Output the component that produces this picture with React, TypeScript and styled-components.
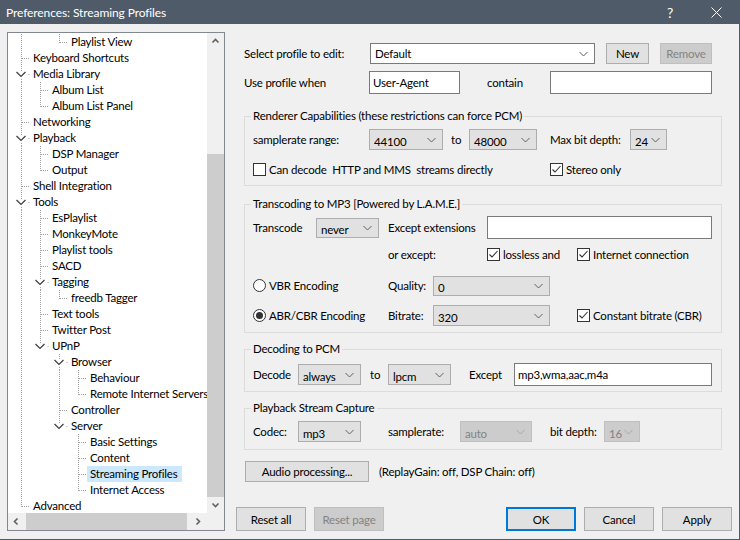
import React from "react";
import styled, { createGlobalStyle } from "styled-components";

const FONT = `"Lato", "Noto Sans", sans-serif`;

const GlobalStyle = createGlobalStyle`
  html, body {
    margin: 0;
    padding: 0;
    background: #f0f0f0;
  }
  body {
    font-family: ${FONT};
    font-size: 11.5px;
    letter-spacing: -0.2px;
    color: #000;
  }
  * {
    box-sizing: border-box;
  }
`;

const Window = styled.div`
  width: 740px;
  height: 540px;
  display: flex;
  flex-direction: column;
  background: #f0f0f0;
  border-right: 1px solid #4f5b69;
  border-bottom: 1px solid #4f5b69;
  overflow: hidden;
`;

const TitleBar = styled.div`
  height: 24px;
  flex: none;
  display: flex;
  align-items: center;
  background: #4f5b69;
  color: #fff;
  padding-left: 6px;
`;

const TitleText = styled.div`
  flex: 1;
  font-size: 12px;
  letter-spacing: -0.1px;
`;

const TitleButton = styled.div`
  width: 46px;
  height: 24px;
  display: flex;
  align-items: center;
  justify-content: center;
  font-size: 14px;
`;

const Body = styled.div`
  display: flex;
  gap: 11px;
  padding: 8px 0 0 7px;
`;

/* ---------- tree ---------- */

const TreeBox = styled.div`
  width: 218px;
  height: 499px;
  flex: none;
  border: 1px solid #828790;
  background: #fff;
  display: grid;
  grid-template-columns: 199px 17px;
  grid-template-rows: 480px 17px;
`;

const TreeContent = styled.div`
  overflow: hidden;
  padding-top: 1px;
`;

const TreeRowLine = styled.div`
  height: 16px;
  display: flex;
  align-items: center;
  white-space: nowrap;
`;

const GuideSvg = styled.svg`
  flex: none;
  line {
    stroke: #a0a0a0;
    stroke-width: 1;
    stroke-dasharray: 1 1;
  }
  path {
    fill: none;
    stroke: #3c3c3c;
    stroke-width: 1.2;
  }
`;

const TreeLabel = styled.span<{ $selected?: boolean }>`
  height: 16px;
  line-height: 16px;
  padding: 0 4px 0 3px;
  background: ${(p) => (p.$selected ? "#cce8ff" : "transparent")};
`;

const VScroll = styled.div`
  background: #f0f0f0;
  display: flex;
  flex-direction: column;
`;

const HScroll = styled.div`
  background: #f0f0f0;
  display: flex;
  align-items: stretch;
`;

const ScrollArrow = styled.div`
  width: 17px;
  height: 17px;
  flex: none;
  display: flex;
  align-items: center;
  justify-content: center;
  svg path {
    fill: none;
    stroke: #606060;
    stroke-width: 1.6;
  }
`;

const VTrack = styled.div`
  flex: 1;
  display: flex;
  flex-direction: column;
`;

const VThumb = styled.div<{ $top: number; $size: number }>`
  margin-top: ${(p) => p.$top}px;
  height: ${(p) => p.$size}px;
  width: 17px;
  background: #cdcdcd;
`;

const HTrack = styled.div`
  flex: 1;
  display: flex;
  align-items: center;
`;

const HThumb = styled.div<{ $left: number; $size: number }>`
  margin-left: ${(p) => p.$left}px;
  width: ${(p) => p.$size}px;
  height: 17px;
  background: #cdcdcd;
`;

const ScrollCorner = styled.div`
  background: #f0f0f0;
`;

/* ---------- right side ---------- */

const RightColumn = styled.div`
  width: 496px;
  height: 499px;
  display: flex;
  flex-direction: column;
`;

const Main = styled.div`
  padding: 11px 10px 0 8px;
  display: flex;
  flex-direction: column;
`;

const Row = styled.div<{ $h: number; $mt?: number }>`
  display: flex;
  align-items: center;
  height: ${(p) => p.$h}px;
  margin-top: ${(p) => p.$mt ?? 0}px;
  white-space: pre;
`;

const Cell = styled.div<{ $w: number }>`
  width: ${(p) => p.$w}px;
  flex: none;
  display: flex;
  align-items: center;
`;

const Text = styled.span<{ $disabled?: boolean }>`
  color: ${(p) => (p.$disabled ? "#838383" : "#000")};
  white-space: pre;
`;

const Group = styled.fieldset<{ $mt: number; $pt: number; $pb: number }>`
  margin: ${(p) => p.$mt}px 0 0 0;
  padding: ${(p) => p.$pt}px 8px ${(p) => p.$pb}px 8px;
  border: 1px solid #dcdcdc;
  min-width: 0;
`;

const Legend = styled.legend`
  padding: 0 2px;
  margin-left: -2px;
  line-height: 14px;
`;

const ComboBox = styled.div<{ $w: number; $h?: number; $variant?: "white" | "gray" | "disabled" }>`
  width: ${(p) => p.$w}px;
  height: ${(p) => p.$h ?? 21}px;
  flex: none;
  display: flex;
  align-items: center;
  padding-left: 4px;
  padding-top: ${(p) => (p.$variant === "white" ? 0 : 3)}px;
  border: 1px solid
    ${(p) =>
      p.$variant === "white" ? "#7a7a7a" : p.$variant === "disabled" ? "#bfbfbf" : "#adadad"};
  background: ${(p) =>
    p.$variant === "white" ? "#fff" : p.$variant === "disabled" ? "#cccccc" : "#e1e1e1"};
  color: ${(p) => (p.$variant === "disabled" ? "#838383" : "#000")};
`;

const ComboText = styled.span`
  flex: 1;
  overflow: hidden;
  white-space: nowrap;
`;

const ComboArrow = styled.svg<{ $disabled?: boolean; $lift?: boolean }>`
  flex: none;
  margin: ${(p) => (p.$lift ? -3 : 0)}px 6px 0 2px;
  path {
    fill: none;
    stroke: ${(p) => (p.$disabled ? "#a6a6a6" : "#606060")};
    stroke-width: 1;
  }
`;

const TextInput = styled.div<{ $w: number; $h?: number }>`
  width: ${(p) => p.$w}px;
  height: ${(p) => p.$h ?? 23}px;
  flex: none;
  display: flex;
  align-items: center;
  padding-left: 3px;
  border: 1px solid #7a7a7a;
  background: #fff;
`;

const Button = styled.div<{ $w: number; $h?: number; $disabled?: boolean; $focused?: boolean }>`
  width: ${(p) => p.$w}px;
  height: ${(p) => p.$h ?? 21}px;
  flex: none;
  display: flex;
  align-items: center;
  justify-content: center;
  border: ${(p) =>
    p.$focused ? "2px solid #0078d7" : p.$disabled ? "1px solid #bfbfbf" : "1px solid #adadad"};
  background: ${(p) => (p.$disabled ? "#cccccc" : "#e1e1e1")};
  color: ${(p) => (p.$disabled ? "#838383" : "#000")};
`;

const CheckBox = styled.span`
  width: 13px;
  height: 13px;
  flex: none;
  border: 1px solid #333;
  background: #fff;
  display: inline-flex;
  align-items: center;
  justify-content: center;
  margin-right: 3px;
  svg polyline {
    fill: none;
    stroke: #333;
    stroke-width: 1.1;
  }
`;

const Radio = styled.span`
  width: 13px;
  height: 13px;
  flex: none;
  border: 1px solid #333;
  border-radius: 50%;
  background: #fff;
  display: inline-flex;
  align-items: center;
  justify-content: center;
  margin-right: 3px;
`;

const RadioDot = styled.span`
  width: 7px;
  height: 7px;
  border-radius: 50%;
  background: #333;
`;

const Footer = styled.div`
  margin-top: auto;
  height: 24px;
  display: flex;
  gap: 8px;
`;

const FooterSpacer = styled.div`
  flex: 1;
`;

/* ---------- data ---------- */

type Item = { label: string; level: number; expanded?: boolean; selected?: boolean };

const ITEMS: Item[] = [
  { label: "Playlist View", level: 2 },
  { label: "Keyboard Shortcuts", level: 0 },
  { label: "Media Library", level: 0, expanded: true },
  { label: "Album List", level: 1 },
  { label: "Album List Panel", level: 1 },
  { label: "Networking", level: 0 },
  { label: "Playback", level: 0, expanded: true },
  { label: "DSP Manager", level: 1 },
  { label: "Output", level: 1 },
  { label: "Shell Integration", level: 0 },
  { label: "Tools", level: 0, expanded: true },
  { label: "EsPlaylist", level: 1 },
  { label: "MonkeyMote", level: 1 },
  { label: "Playlist tools", level: 1 },
  { label: "SACD", level: 1 },
  { label: "Tagging", level: 1, expanded: true },
  { label: "freedb Tagger", level: 2 },
  { label: "Text tools", level: 1 },
  { label: "Twitter Post", level: 1 },
  { label: "UPnP", level: 1, expanded: true },
  { label: "Browser", level: 2, expanded: true },
  { label: "Behaviour", level: 3 },
  { label: "Remote Internet Servers", level: 3 },
  { label: "Controller", level: 2 },
  { label: "Server", level: 2, expanded: true },
  { label: "Basic Settings", level: 3 },
  { label: "Content", level: 3 },
  { label: "Streaming Profiles", level: 3, selected: true },
  { label: "Internet Access", level: 3 },
  { label: "Advanced", level: 0 },
];

const continues = (i: number, l: number) => {
  for (let j = i + 1; j < ITEMS.length; j++) {
    if (ITEMS[j].level < l) return false;
    if (ITEMS[j].level === l) return true;
  }
  return false;
};

const ROWS = ITEMS.map((it, i) => ({
  ...it,
  ancestors: Array.from({ length: it.level }, (_, l) => continues(i, l)),
  hasNext: continues(i, it.level),
}));

type TreeRow = (typeof ROWS)[number];

/* ---------- small drawings ---------- */

const Guides = ({ row }: { row: TreeRow }) => {
  const lx = (l: number) => 13.5 + 19 * l;
  const x = lx(row.level);
  return (
    <GuideSvg width={22 + 19 * row.level} height={16}>
      {row.ancestors.map((c, l) => (c ? <line key={l} x1={lx(l)} y1={0} x2={lx(l)} y2={16} /> : null))}
      {row.expanded ? (
        <>
          <line x1={x} y1={0} x2={x} y2={5} />
          {row.hasNext && <line x1={x} y1={13} x2={x} y2={16} />}
          <line x1={x + 7} y1={8.5} x2={x + 8} y2={8.5} />
          <path d={`M${x - 5} 6 L${x - 0.5} 10.5 L${x + 4} 6`} />
        </>
      ) : (
        <>
          <line x1={x} y1={0} x2={x} y2={row.hasNext ? 16 : 9} />
          <line x1={x + 0.5} y1={8.5} x2={x + 8} y2={8.5} />
        </>
      )}
    </GuideSvg>
  );
};

const Chevron = ({ dir }: { dir: "up" | "down" | "left" | "right" }) => {
  const d = {
    up: "M1.5 5.5 L4.5 2.5 L7.5 5.5",
    down: "M1.5 2.5 L4.5 5.5 L7.5 2.5",
    left: "M5.5 1.5 L2.5 4.5 L5.5 7.5",
    right: "M2.5 1.5 L5.5 4.5 L2.5 7.5",
  }[dir];
  return (
    <svg width={9} height={9}>
      <path d={d} />
    </svg>
  );
};

const Combo = ({
  w,
  h,
  value,
  variant = "gray",
}: {
  w: number;
  h?: number;
  value: string;
  variant?: "white" | "gray" | "disabled";
}) => (
  <ComboBox $w={w} $h={h} $variant={variant}>
    <ComboText>{value}</ComboText>
    <ComboArrow width={9} height={6} $disabled={variant === "disabled"} $lift={variant !== "white"}>
      <path d="M0.5 1 L4.5 5 L8.5 1" />
    </ComboArrow>
  </ComboBox>
);

const Check = ({ checked, label }: { checked?: boolean; label: string }) => (
  <>
    <CheckBox>
      {checked && (
        <svg width={11} height={11}>
          <polyline points="1.5,5.5 4,8 9.5,2" />
        </svg>
      )}
    </CheckBox>
    <Text>{label}</Text>
  </>
);

const RadioOption = ({ checked, label }: { checked?: boolean; label: string }) => (
  <>
    <Radio>{checked && <RadioDot />}</Radio>
    <Text>{label}</Text>
  </>
);

/* ---------- page ---------- */

const Tree = () => (
  <TreeBox>
    <TreeContent>
      {ROWS.map((row) => (
        <TreeRowLine key={row.label}>
          <Guides row={row} />
          <TreeLabel $selected={row.selected}>{row.label}</TreeLabel>
        </TreeRowLine>
      ))}
    </TreeContent>
    <VScroll>
      <ScrollArrow>
        <Chevron dir="up" />
      </ScrollArrow>
      <VTrack>
        <VThumb $top={104} $size={343} />
      </VTrack>
      <ScrollArrow>
        <Chevron dir="down" />
      </ScrollArrow>
    </VScroll>
    <HScroll>
      <ScrollArrow>
        <Chevron dir="left" />
      </ScrollArrow>
      <HTrack>
        <HThumb $left={1} $size={161} />
      </HTrack>
      <ScrollArrow>
        <Chevron dir="right" />
      </ScrollArrow>
    </HScroll>
    <ScrollCorner />
  </TreeBox>
);

export default function App() {
  return (
    <>
      <GlobalStyle />
      <Window>
        <TitleBar>
          <TitleText>Preferences: Streaming Profiles</TitleText>
          <TitleButton>?</TitleButton>
          <TitleButton>
            <svg width={11} height={11}>
              <path d="M0.5 0.5 L10.5 10.5 M10.5 0.5 L0.5 10.5" stroke="#fff" strokeWidth={1} />
            </svg>
          </TitleButton>
        </TitleBar>
        <Body>
          <Tree />
          <RightColumn>
            <Main>
              <Row $h={21}>
                <Cell $w={126}>Select profile to edit:</Cell>
                <Combo w={225} value="Default" variant="white" />
                <Cell $w={11} />
                <Button $w={43}>New</Button>
                <Cell $w={11} />
                <Button $w={52} $disabled>
                  Remove
                </Button>
              </Row>
              <Row $h={23} $mt={7}>
                <Cell $w={125}>Use profile when</Cell>
                <TextInput $w={91}>User-Agent</TextInput>
                <Cell $w={27} />
                <Cell $w={63}>contain</Cell>
                <TextInput $w={162} />
              </Row>

              <Group $mt={15} $pt={6} $pb={7}>
                <Legend>Renderer Capabilities (these restrictions can force PCM)</Legend>
                <Row $h={21}>
                  <Cell $w={116}>samplerate range:</Cell>
                  <Cell $w={82}>
                    <Combo w={74} value="44100" />
                  </Cell>
                  <Cell $w={18}>to</Cell>
                  <Cell $w={81}>
                    <Combo w={68} value="48000" />
                  </Cell>
                  <Cell $w={80}>Max bit depth:</Cell>
                  <Combo w={37} value="24" />
                </Row>
                <Row $h={18} $mt={10}>
                  <Cell $w={297}>
                    <Check label="Can decode  HTTP and MMS  streams directly" />
                  </Cell>
                  <Check checked label="Stereo only" />
                </Row>
              </Group>

              <Group $mt={11} $pt={5} $pb={2}>
                <Legend>Transcoding to MP3 [Powered by L.A.M.E.]</Legend>
                <Row $h={23}>
                  <Cell $w={63}>Transcode</Cell>
                  <Cell $w={72}>
                    <Combo w={63} h={20} value="never" />
                  </Cell>
                  <Cell $w={99}>Except extensions</Cell>
                  <TextInput $w={225} />
                </Row>
                <Row $h={31}>
                  <Cell $w={135} />
                  <Cell $w={99}>or except:</Cell>
                  <Cell $w={90}>
                    <Check checked label="lossless and" />
                  </Cell>
                  <Check checked label="Internet connection" />
                </Row>
                <Row $h={31}>
                  <Cell $w={135}>
                    <RadioOption label="VBR Encoding" />
                  </Cell>
                  <Cell $w={45}>Quality:</Cell>
                  <Combo w={117} h={20} value="0" />
                </Row>
                <Row $h={29}>
                  <Cell $w={135}>
                    <RadioOption checked label="ABR/CBR Encoding" />
                  </Cell>
                  <Cell $w={45}>Bitrate:</Cell>
                  <Cell $w={144}>
                    <Combo w={117} value="320" />
                  </Cell>
                  <Check checked label="Constant bitrate (CBR)" />
                </Row>
              </Group>

              <Group $mt={9} $pt={7} $pb={5}>
                <Legend>Decoding to PCM</Legend>
                <Row $h={23}>
                  <Cell $w={45}>Decode</Cell>
                  <Cell $w={72}>
                    <Combo w={63} h={21} value="always" />
                  </Cell>
                  <Cell $w={18}>to</Cell>
                  <Cell $w={81}>
                    <Combo w={63} h={21} value="lpcm" />
                  </Cell>
                  <Cell $w={45}>Except</Cell>
                  <TextInput $w={198}>mp3,wma,aac,m4a</TextInput>
                </Row>
              </Group>

              <Group $mt={9} $pt={6} $pb={7}>
                <Legend>Playback Stream Capture</Legend>
                <Row $h={21}>
                  <Cell $w={45}>Codec:</Cell>
                  <Cell $w={90}>
                    <Combo w={63} value="mp3" />
                  </Cell>
                  <Cell $w={72}>samplerate:</Cell>
                  <Cell $w={90}>
                    <Combo w={72} value="auto" variant="disabled" />
                  </Cell>
                  <Cell $w={54}>bit depth:</Cell>
                  <Combo w={36} value="16" variant="disabled" />
                </Row>
              </Group>

              <Row $h={21} $mt={11}>
                <Cell $w={1} />
                <Button $w={124}>Audio processing...</Button>
                <Cell $w={10} />
                <Text>(ReplayGain: off, DSP Chain: off)</Text>
              </Row>
            </Main>
            <Footer>
              <Button $w={70} $h={24}>
                Reset all
              </Button>
              <Button $w={70} $h={24} $disabled>
                Reset page
              </Button>
              <FooterSpacer />
              <Button $w={70} $h={24} $focused>
                OK
              </Button>
              <Button $w={70} $h={24}>
                Cancel
              </Button>
              <Button $w={70} $h={24}>
                Apply
              </Button>
            </Footer>
          </RightColumn>
        </Body>
      </Window>
    </>
  );
}
